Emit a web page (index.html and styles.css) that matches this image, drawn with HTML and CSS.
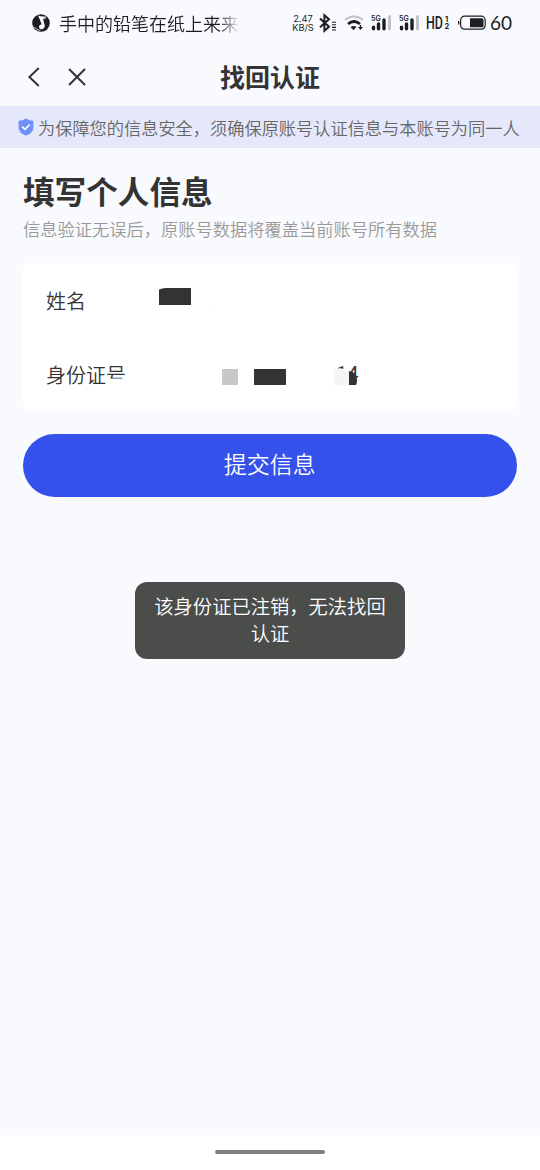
FILE: index.html
```html
<!DOCTYPE html>
<html lang="zh-CN">
<head>
  <meta charset="UTF-8">
  <meta name="viewport" content="width=device-width, initial-scale=1.0">
  <title>找回认证</title>
  <link rel="stylesheet" href="styles.css">
</head>
<body>

  <div class="status-bar">
    <svg class="music-icon" width="18" height="18" viewBox="0 0 18 18">
      <circle cx="9" cy="9" r="8.8" fill="#1c1e20"/>
      <path d="M6 1.5Q10 3.2 14.5 2.3L11 5l1.7 6c.8 3.6-3.9 5.7-5.3 3-1-2 .4-3.700 2.300-3.600L7.800 5.600z" fill="#f9fafe"/>
      <path d="M2.300 12.800q2 3.400 6 3.600M14.400 3.800q-2 1-3.400 1" fill="none" stroke="#f9fafe" stroke-width=".8"/>
    </svg>
    <span class="ticker">手中的铅笔在纸上来来</span>
    <div class="status-icons">
      <div class="speed"><span>2.47</span><span>KB/S</span></div>
      <svg class="bluetooth" width="18" height="18" viewBox="0 0 18 18">
        <path d="M1 4.500l9 8.200-4.600 4V1.200L10 5.300l-9 8" fill="none" stroke="#1c1e20" stroke-width="2"/>
        <path d="M13 8.200h4M13 10.800h4M13 13.400h4M13 16h4" stroke="#1c1e20" stroke-width="1.100"/>
      </svg>
      <svg class="wifi" width="20" height="16" viewBox="0 0 20 16">
        <path d="M1 4.800Q10-2 19 4.800" fill="none" stroke="#c2c3c6" stroke-width="2.200"/>
        <path d="M4 9Q10 4 16 9" fill="none" stroke="#1c1e20" stroke-width="2.800"/>
        <path d="M6.500 12Q9.500 10 12.500 12L9.500 15.200z" fill="#1c1e20"/>
        <path d="M16.500 10v3" stroke="#1c1e20" stroke-width="1.300"/>
        <path d="M14 12h5l-2.500 3z" fill="#1c1e20"/>
      </svg>
      <svg class="signal" width="21" height="18" viewBox="0 0 21 18">
        <text x="0" y="6.500" class="signal-text">5G</text>
        <path d="M2.500 13.300v1.400M7.500 10v4.700M13 6v8.700" stroke="#1c1e20" stroke-width="3.400" stroke-linecap="round"/>
        <path d="M18.500 2.500v12.200" stroke="#c2c3c6" stroke-width="3" stroke-linecap="round"/>
      </svg>
      <svg class="signal" width="21" height="18" viewBox="0 0 21 18">
        <text x="0" y="6.500" class="signal-text">5G</text>
        <path d="M2.500 13.300v1.400M7.500 10v4.700M13 6v8.700" stroke="#1c1e20" stroke-width="3.400" stroke-linecap="round"/>
        <path d="M18.500 2.500v12.200" stroke="#c2c3c6" stroke-width="3" stroke-linecap="round"/>
      </svg>
      <svg class="hd" width="24" height="18" viewBox="0 0 24 18">
        <text x="0" y="15" class="hd-text" textLength="17" lengthAdjust="spacingAndGlyphs">HD</text>
        <text x="19" y="7.500" class="hd-sub">1</text>
        <text x="18.500" y="15.200" class="hd-sub">2</text>
      </svg>
      <svg class="battery" width="28" height="16" viewBox="0 0 28 16">
        <rect x="2.600" y="1.200" width="24.600" height="13" rx="4" fill="none" stroke="#1c1e20" stroke-width="1.200"/>
        <path d="M.7 6v3.400" stroke="#1c1e20" stroke-width="1.300"/>
        <path d="M12 3.200h12a1.500 1.500 0 0 1 1.500 1.500v6a1.500 1.500 0 0 1-1.500 1.500H12z" fill="#1c1e20"/>
      </svg>
      <span class="percent">60</span>
    </div>
  </div>

  <div class="nav-bar">
    <div class="nav-buttons">
      <svg width="12" height="20" viewBox="0 0 12 20">
        <path d="M10.800 1L1.400 10l9.400 9" fill="none" stroke="#333" stroke-width="2"/>
      </svg>
      <svg width="18" height="18" viewBox="0 0 18 18">
        <path d="M1 1l16 16M17 1L1 17" stroke="#333" stroke-width="2"/>
      </svg>
    </div>
    <h1>找回认证</h1>
  </div>

  <div class="notice">
    <svg width="16" height="18" viewBox="0 0 16 18">
      <path d="M8 .6q3.400 2.200 7.400 2.200V9c0 4.600-3.200 7.100-7.400 8.600C3.800 16.100.6 13.600.6 9V2.800Q4.600 2.800 8 .6z" fill="#6f8ef8"/>
      <path d="M4.200 8.600l2.800 2.700 4.800-4.800" fill="none" stroke="#fff" stroke-width="1.700"/>
    </svg>
    <span>为保障您的信息安全，须确保原账号认证信息与本账号为同一人</span>
  </div>

  <div class="content">
    <h2>填写个人信息</h2>
    <p class="hint">信息验证无误后，原账号数据将覆盖当前账号所有数据</p>

    <div class="card">
      <div class="row">
        <span class="label">姓名</span>
        <svg class="value" width="230" height="74" viewBox="0 0 230 74">
          <path d="M9 26.500q3-1.500 7-1.500h25v17H9z" fill="#333"/>
          <path d="M63 46h1.500" stroke="#ddd"/>
        </svg>
      </div>
      <div class="row">
        <span class="label">身份证<span class="cut">号</span></span>
        <svg class="value" width="230" height="74" viewBox="0 0 230 74">
          <text x="186" y="44" class="digits">14</text>
          <path d="M184 32q8-2 15 2v16h-15z" fill="#fff"/>
          <path d="M72 32h16v16H72z" fill="#c8c8c8"/>
          <path d="M104 32h32v16h-32z" fill="#333"/>
          <path d="M184 32h5q5 2 10 2v14h-15z" fill="#f5f5f5"/>
          <path d="M199 34q8 1 8 9 0 3-1 5h-7z" fill="#333"/>
        </svg>
      </div>
    </div>

    <button class="submit">提交信息</button>
  </div>

  <div class="toast">该身份证已注销，无法找回认证</div>

  <div class="home-bar"><div class="handle"></div></div>

</body>
</html>
```
FILE: styles.css
```css
* {
  box-sizing: border-box;
}

body {
  font-family: "Noto Sans CJK SC", sans-serif;
  font-weight: 350;
  margin: 0;
  height: 1170px;
  background-color: #f9fafe;
  color: #333;
  display: flex;
  flex-direction: column;
}

svg {
  display: block;
  flex-shrink: 0;
  overflow: visible;
}

.status-bar {
  height: 46px;
  padding: 0 28px 0 32px;
  display: flex;
  align-items: center;
  color: #1c1e20;
}

.ticker {
  margin-left: 9px;
  width: 181px;
  overflow: hidden;
  white-space: nowrap;
  font-size: 18px;
  line-height: 26px;
  -webkit-mask-image: linear-gradient(to right, #000 88%, transparent);
  mask-image: linear-gradient(to right, #000 88%, transparent);
}

.status-icons {
  margin-left: auto;
  display: flex;
  align-items: center;
}

.speed {
  width: 22px;
  margin-right: 1px;
  display: flex;
  flex-direction: column;
  align-items: center;
  font-family: Inter, sans-serif;
  font-size: 9.3px;
  font-weight: 400;
  line-height: 9px;
}

.bluetooth {
  margin-left: 4px;
}

.wifi {
  margin-left: 7px;
}

.signal {
  margin-left: 7px;
}

.signal-text {
  font-family: Inter, sans-serif;
  font-size: 7px;
  font-weight: 600;
  fill: #1c1e20;
}

.hd {
  margin-left: 6px;
}

.hd-text {
  font-family: Roboto, sans-serif;
  font-size: 18px;
  font-weight: 500;
  fill: #1c1e20;
}

.hd-sub {
  font-family: Inter, sans-serif;
  font-size: 7.5px;
  font-weight: 700;
  fill: #1c1e20;
}

.battery {
  margin-left: 8px;
}

.percent {
  margin-left: 4px;
  width: 22px;
  font-family: Lato, sans-serif;
  font-size: 19px;
  font-weight: 400;
  line-height: 24px;
}

.nav-bar {
  height: 60px;
  padding: 0 28px;
  display: grid;
  grid-template-columns: 1fr auto 1fr;
  align-items: center;
}

.nav-buttons {
  display: flex;
  align-items: center;
  gap: 28px;
  padding-top: 1px;
}

h1 {
  margin: 0;
  font-size: 25px;
  line-height: 36px;
  font-weight: 700;
}

.notice {
  height: 42px;
  padding: 0 18px;
  display: flex;
  align-items: center;
  gap: 4px;
  background-color: #e5e8fb;
  color: #666;
  font-size: 17.22px;
  white-space: nowrap;
}

.content {
  padding: 19px 23.5px 0 23px;
}

h2 {
  margin: 0;
  font-size: 31.6px;
  line-height: 46px;
  font-weight: 700;
}

.hint {
  margin: 3px 0 21px;
  color: #999;
  font-size: 17.25px;
  line-height: 26px;
}

.card {
  background-color: #fff;
  border-radius: 6px;
}

.row {
  height: 74px;
  padding-left: 23px;
  display: flex;
  align-items: center;
}

.label {
  width: 104px;
  padding-top: 1px;
  font-size: 20px;
  line-height: 30px;
}

/* lower half of the last character stays hidden */
.cut {
  display: inline-block;
  clip-path: inset(0 0 11px 0);
}

.digits {
  font-family: Roboto, sans-serif;
  font-size: 20px;
  font-weight: 400;
  fill: #333;
}

.submit {
  display: block;
  width: 100%;
  height: 63px;
  margin-top: 23px;
  padding: 0 0 5px;
  border: none;
  border-radius: 32px;
  background-color: #3551eb;
  color: #fff;
  font-family: inherit;
  font-size: 23px;
  font-weight: inherit;
}

.toast {
  width: 270px;
  height: 77px;
  margin: 85px auto 0;
  padding: 11px 18px;
  border-radius: 12px;
  background-color: #4b4d4b;
  color: #fff;
  font-size: 19.3px;
  line-height: 27px;
  text-align: center;
}

.home-bar {
  margin-top: auto;
  height: 35px;
  padding-top: 15px;
  background-color: #fff;
}

.handle {
  width: 110px;
  height: 4px;
  margin: 0 auto;
  border-radius: 2px;
  background-color: #808080;
}
```
